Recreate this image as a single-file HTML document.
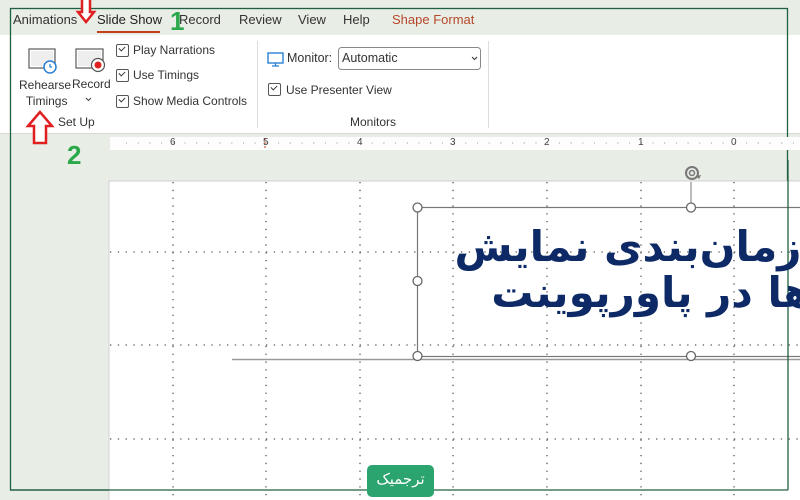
<!DOCTYPE html>
<html><head><meta charset="utf-8"><style>
body{margin:0;width:800px;height:500px;overflow:hidden;position:relative;background:#e8ede6;font-family:"Segoe UI","Liberation Sans",sans-serif;color:#333}
.a{position:absolute;white-space:nowrap}
.tab{font-size:13px;top:12px;color:#333}
.cb{position:absolute;width:11px;height:11px;border:1px solid #555;border-radius:2px;background:#fff}
.cb:after{content:"";position:absolute;left:2px;top:1px;width:5px;height:3px;border-left:1.3px solid #333;border-bottom:1.3px solid #333;transform:rotate(-45deg)}
.lbl{font-size:12px;color:#333}
</style></head><body>
<div class="a" style="left:0;top:35px;width:800px;height:98px;background:#fff;border-bottom:1px solid #d8d8d8"></div>
<div class="a tab" style="left:13px">Animations</div>
<div class="a tab" style="left:97px;color:#222;font-weight:500">Slide Show</div>
<div class="a" style="left:97px;top:31px;width:63px;height:2px;background:#c43e1c"></div>
<div class="a tab" style="left:179px">Record</div>
<div class="a tab" style="left:239px">Review</div>
<div class="a tab" style="left:298px">View</div>
<div class="a tab" style="left:343px">Help</div>
<div class="a tab" style="left:392px;color:#b7472a">Shape Format</div>
<div class="a" style="left:170px;top:6px;font-size:26px;font-weight:bold;color:#2aa84a;font-family:'Liberation Sans'">1</div>
<div class="a" style="left:67px;top:140px;font-size:26px;font-weight:bold;color:#2aa84a;font-family:'Liberation Sans'">2</div>
<svg class="a" style="left:0;top:0" width="800" height="500">
<rect x="10.5" y="8.5" width="777" height="481.5" fill="none" stroke="#1f6040" stroke-width="1.3"/>
<path d="M82 0 V12 H78 L86 22 L94 12 H90 V0" fill="#fff" stroke="#e02020" stroke-width="2.5"/>
<path d="M40 112 L28 126 H34 V143 H46 V126 H52 Z" fill="#fff" stroke="#e02020" stroke-width="2.5"/>
<rect x="29" y="49" width="26" height="19" fill="#fff" stroke="#666" stroke-width="1.3"/>
<rect x="31" y="51" width="22" height="15" fill="#eee"/>
<circle cx="50" cy="67" r="6" fill="#fff" stroke="#2a7fd4" stroke-width="1.5"/>
<path d="M50 64 V67 H52" fill="none" stroke="#2a7fd4" stroke-width="1.2"/>
<rect x="76" y="49" width="27" height="19" fill="#fff" stroke="#666" stroke-width="1.3"/>
<rect x="78" y="51" width="23" height="15" fill="#eee"/>
<circle cx="98" cy="65" r="6.5" fill="#fff" stroke="#555" stroke-width="1.2"/>
<circle cx="98" cy="65" r="3.5" fill="#e02020"/>
<path d="M86 98 l2.5 2.5 l2.5 -2.5" fill="none" stroke="#444" stroke-width="1"/>
<line x1="257.5" y1="41" x2="257.5" y2="128" stroke="#ddd"/>
<line x1="488.5" y1="41" x2="488.5" y2="128" stroke="#ddd"/>
<rect x="268" y="53" width="15" height="10" fill="none" stroke="#2a7fd4" stroke-width="1.4"/>
<path d="M272 66 H279 M275.5 63 V66" stroke="#2a7fd4" stroke-width="1.3"/>
<rect x="338.5" y="47.5" width="142" height="22" rx="3" fill="#fff" stroke="#888"/>
<path d="M472 57 l2.5 2.5 l2.5 -2.5" fill="none" stroke="#333" stroke-width="1"/>
<rect x="110" y="137" width="690" height="13" fill="#fdfdfd"/>
<g stroke="#999" stroke-width="1" stroke-dasharray="1,22.4">
<line x1="126" y1="143" x2="800" y2="143"/><line x1="137.7" y1="143" x2="800" y2="143"/><line x1="149.4" y1="143" x2="800" y2="143"/>
</g>
<line x1="265" y1="138" x2="265" y2="150" stroke="#c43e1c" stroke-dasharray="2,2"/>
<rect x="109" y="181" width="700" height="330" fill="#fff" stroke="#d0d0d0"/>
<g stroke="#555" stroke-width="1.3" stroke-dasharray="1.3,6.5">
<line x1="173" y1="182" x2="173" y2="500"/><line x1="266" y1="182" x2="266" y2="500"/>
<line x1="360" y1="182" x2="360" y2="500"/><line x1="453" y1="182" x2="453" y2="500"/>
<line x1="547" y1="182" x2="547" y2="500"/><line x1="641" y1="182" x2="641" y2="500"/>
<line x1="734" y1="182" x2="734" y2="500"/>
<line x1="110" y1="252" x2="800" y2="252"/><line x1="110" y1="345" x2="800" y2="345"/>
<line x1="110" y1="439" x2="800" y2="439"/>
</g>
<line x1="232" y1="359.5" x2="800" y2="359.5" stroke="#999" stroke-width="1.5"/>
<rect x="417.5" y="207.5" width="400" height="149" fill="none" stroke="#777" stroke-width="1.2"/>
<line x1="691" y1="182" x2="691" y2="207" stroke="#777"/>
<circle cx="692" cy="173" r="6" fill="none" stroke="#777" stroke-width="2"/>
<circle cx="692" cy="173" r="2.5" fill="none" stroke="#777" stroke-width="1.5"/>
<path d="M696 176 l5 -1 l-2 4z" fill="#777"/>
<g fill="#fff" stroke="#666" stroke-width="1.3">
<circle cx="417.5" cy="207.5" r="4.5"/><circle cx="691" cy="207.5" r="4.5"/>
<circle cx="417.5" cy="281" r="4.5"/><circle cx="417.5" cy="356" r="4.5"/><circle cx="691" cy="356" r="4.5"/>
</g>
<line x1="788" y1="160" x2="788" y2="490" stroke="#1f6040" stroke-width="1.3"/>
<line x1="10" y1="490" x2="788" y2="490" stroke="#1f6040" stroke-width="1.3"/>
<rect x="367" y="465" width="67" height="32" rx="5" fill="#2ca46f"/>
</svg>
<div class="a lbl" style="left:19px;top:77px;text-align:center;line-height:16px">Rehearse<br>&nbsp;Timings</div>
<div class="a lbl" style="left:72px;top:77px">Record</div>
<div class="a lbl" style="left:58px;top:115px">Set Up</div>
<div class="cb" style="left:116px;top:44px"></div><div class="a lbl" style="left:133px;top:43px">Play Narrations</div>
<div class="cb" style="left:116px;top:69px"></div><div class="a lbl" style="left:133px;top:68px">Use Timings</div>
<div class="cb" style="left:116px;top:95px"></div><div class="a lbl" style="left:133px;top:94px">Show Media Controls</div>
<div class="a lbl" style="left:287px;top:51px;font-size:12.5px">Monitor:</div>
<div class="a lbl" style="left:342px;top:51px;font-size:12.5px">Automatic</div>
<div class="cb" style="left:268px;top:83px"></div><div class="a lbl" style="left:286px;top:83px">Use Presenter View</div>
<div class="a lbl" style="left:350px;top:115px">Monitors</div>
<div class="a" style="top:137px;left:0;font-size:10px;color:#444;font-family:'Liberation Sans'">
<span class="a" style="left:170px">6</span><span class="a" style="left:263px">5</span><span class="a" style="left:357px">4</span><span class="a" style="left:450px">3</span><span class="a" style="left:544px">2</span><span class="a" style="left:638px">1</span><span class="a" style="left:731px">0</span></div>
<div class="a" style="left:420px;top:210px;width:380px;height:145px;overflow:hidden">
<div class="a" style="right:-140px;top:14px;direction:rtl;text-align:right;font-family:'DejaVu Sans','Noto Sans CJK SC',sans-serif;font-weight:bold;font-size:42px;line-height:46px;color:#0d2a66">تنظیم زمان‌بندی نمایش<br>اسلایدها در پاورپوینت</div>
</div>
<div class="a" style="left:367px;top:470px;width:67px;text-align:center;font-size:15px;color:#fff;direction:rtl;font-family:'DejaVu Sans',sans-serif">ترجمیک</div>
</body></html>
